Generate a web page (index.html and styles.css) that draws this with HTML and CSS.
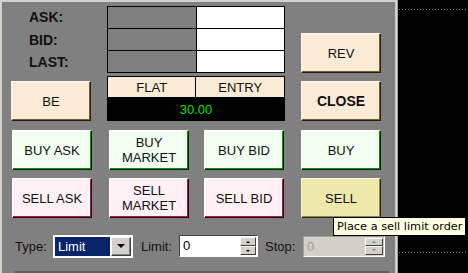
FILE: index.html
```html
<!DOCTYPE html>
<html>
<head>
<meta charset="utf-8">
<link rel="stylesheet" href="styles.css">
</head>
<body>
<div class="screen">
  <div class="panel">
    <div class="grid">
      <div class="labels">
        <div class="lbl">ASK:</div>
        <div class="lbl">BID:</div>
        <div class="lbl">LAST:</div>
      </div>
      <table class="quotes">
        <tr><td class="qk"></td><td class="qv"></td></tr>
        <tr><td class="qk"></td><td class="qv"></td></tr>
        <tr><td class="qk"></td><td class="qv"></td></tr>
      </table>
      <div class="btn beige rev">REV</div>

      <div class="btn beige be">BE</div>
      <table class="pos">
        <tr class="pos-head"><td>FLAT</td><td>ENTRY</td></tr>
        <tr class="pos-val"><td colspan="2">30.00</td></tr>
      </table>
      <div class="btn beige close">CLOSE</div>

      <div class="btn green">BUY ASK</div>
      <div class="btn green">BUY<br>MARKET</div>
      <div class="btn green">BUY BID</div>
      <div class="btn green">BUY</div>

      <div class="btn pink">SELL ASK</div>
      <div class="btn pink">SELL<br>MARKET</div>
      <div class="btn pink">SELL BID</div>
      <div class="btn gold">SELL</div>
    </div>

    <div class="controls">
      <span class="clabel">Type:</span>
      <div class="combo">
        <div class="combo-sel">Limit</div>
        <div class="combo-btn"><span class="tri-down"></span></div>
      </div>
      <span class="clabel limit-lbl">Limit:</span>
      <div class="spin">
        <div class="spin-val">0</div>
        <div class="spin-btns">
          <div class="sbtn"><span class="tri-up"></span></div>
          <div class="sbtn"><span class="tri-dn"></span></div>
        </div>
      </div>
      <span class="clabel stop-lbl">Stop:</span>
      <div class="spin disabled">
        <div class="spin-val">0</div>
        <div class="spin-btns">
          <div class="sbtn"><span class="tri-up"></span></div>
          <div class="sbtn"><span class="tri-dn"></span></div>
        </div>
      </div>
    </div>
    <div class="hbar"></div>
  </div>
  <div class="divider"></div>
  <div class="chart">
    <div class="dots top-dots"></div>
    <div class="dots bottom-dots"></div>
  </div>
  <div class="tooltip">Place a sell limit order</div>
</div>
</body>
</html>
```
FILE: styles.css
```css
html, body {
  margin: 0;
  padding: 0;
  background: #000;
}
.screen {
  position: relative;
  display: flex;
  width: 468px;
  height: 273px;
  overflow: hidden;
  font-family: "Liberation Sans", Arial, sans-serif;
  font-size: 13px;
  color: #000;
}
.panel {
  box-sizing: border-box;
  width: 395px;
  height: 273px;
  background: #808080;
  border-top: 2px solid #d4d0c8;
  border-left: 2px solid #d4d0c8;
  padding: 4px 0 0 10px;
  display: flex;
  flex-direction: column;
}
.divider {
  box-sizing: border-box;
  width: 3px;
  height: 273px;
  background: #d4d0c8;
  border-right: 1px solid #a8a8a8;
}
.chart {
  flex: 1;
  background: #000;
  display: flex;
  flex-direction: column;
}
.dots {
  height: 1px;
  margin-left: 1px;
  background: repeating-linear-gradient(90deg, #8a8a8a 0 1px, transparent 1px 3px);
}
.top-dots { margin-top: 9px; }
.bottom-dots { margin-top: 242px; }

.grid {
  display: grid;
  grid-template-columns: 81px 79px 81px 80px;
  grid-template-rows: 67px 48px 49px 48px;
  column-gap: 16px;
  align-items: end;
}
.labels {
  align-self: stretch;
  display: flex;
  flex-direction: column;
  padding-left: 17px;
}
.lbl {
  height: 22px;
  line-height: 22px;
  font-weight: bold;
  font-size: 14px;
  color: #111;
}
.labels .lbl:first-child { height: 23px; }

table {
  border-collapse: collapse;
  border-spacing: 0;
}
.quotes {
  grid-column: 2 / span 2;
  margin-left: -2px;
  width: 178px;
  height: 67px;
  align-self: start;
}
.quotes td {
  border: 1px solid #000;
  height: 21px;
  padding: 0;
}
.qk { background: #808080; width: 88px; }
.qv { background: #fff; }

.pos {
  grid-column: 2 / span 2;
  margin-left: -2px;
  width: 178px;
  height: 45px;
}
.pos td {
  border: 1px solid #000;
  padding: 0;
  text-align: center;
}
.pos-head td {
  background: #faebd7;
  height: 20px;
  width: 88px;
  color: #111;
}
.pos-val td {
  background: #000;
  color: #00e000;
  height: 22px;
}

.btn {
  box-sizing: border-box;
  width: 80px;
  height: 40px;
  border: 1px solid;
  display: flex;
  align-items: center;
  justify-content: center;
  text-align: center;
  line-height: 15px;
  color: #111;
}
.be { margin-left: -1px; }
.beige {
  background: #faebd7;
  border-color: #fffaf2 #2a1e0e #2a1e0e #fffaf2;
  box-shadow: inset -1px -1px 0 #7a5a2e;
}
.green {
  background: #f0fff0;
  border-color: #ffffff #002400 #002400 #ffffff;
  box-shadow: inset -1px -1px 0 #0a8a0a;
}
.pink {
  background: #fff0f5;
  border-color: #ffffff #2e0012 #2e0012 #ffffff;
  box-shadow: inset -1px -1px 0 #9a2050;
}
.gold {
  background: #eee8aa;
  border-color: #fbf8e0 #2a2810 #2a2810 #fbf8e0;
  box-shadow: inset -1px -1px 0 #8e8850;
}
.close {
  font-weight: bold;
  font-size: 14px;
}

.controls {
  display: flex;
  align-items: center;
  margin-top: 16px;
  padding-left: 3px;
  height: 24px;
}
.clabel {
  width: 38px;
  color: #1a1010;
}
.limit-lbl { margin-left: 8px; }
.stop-lbl { margin-left: 7px; }

.combo {
  box-sizing: border-box;
  width: 80px;
  height: 23px;
  background: #fff;
  padding: 2px;
  display: flex;
  gap: 1px;
}
.combo-sel {
  flex: 1;
  background: #0a246a;
  color: #fff;
  line-height: 19px;
  padding-left: 3px;
}
.combo-btn {
  box-sizing: border-box;
  width: 20px;
  height: 19px;
  background: #d4d0c8;
  border: 1px solid;
  border-color: #fff #404040 #404040 #fff;
  box-shadow: inset -1px -1px 0 #808080;
  display: flex;
  align-items: center;
  justify-content: center;
}
.tri-down {
  width: 0;
  height: 0;
  border-left: 4px solid transparent;
  border-right: 4px solid transparent;
  border-top: 4px solid #000;
}

.spin {
  box-sizing: border-box;
  width: 79px;
  height: 22px;
  background: #fff;
  border: 1px solid;
  border-color: #404040 #fff #fff #404040;
  display: flex;
  padding: 1px 1px 1px 0;
}
.spin.disabled {
  width: 82px;
  height: 21px;
  background: #d4d0c8;
  border-color: #a0a0a0 #fff #fff #a0a0a0;
}
.spin-val {
  flex: 1;
  padding-left: 3px;
  line-height: 18px;
}
.disabled .spin-val { color: #a09c94; }
.spin-btns {
  width: 16px;
  display: flex;
  flex-direction: column;
}
.disabled .spin-btns { width: 18px; }
.sbtn {
  box-sizing: border-box;
  flex: 1;
  background: #d4d0c8;
  border: 1px solid;
  border-color: #fff #404040 #404040 #fff;
  display: flex;
  align-items: center;
  justify-content: center;
}
.tri-up {
  width: 0; height: 0;
  border-left: 2px solid transparent;
  border-right: 2px solid transparent;
  border-bottom: 2px solid #000;
}
.tri-dn {
  width: 0; height: 0;
  border-left: 2px solid transparent;
  border-right: 2px solid transparent;
  border-top: 2px solid #000;
}
.disabled .tri-up { border-bottom-color: #808080; }
.disabled .tri-dn { border-top-color: #808080; }

.hbar {
  margin-top: auto;
  margin-left: 3px;
  width: 374px;
  height: 2px;
  background: #5e5e5e;
}

.tooltip {
  position: absolute;
  left: 333px;
  top: 217px;
  box-sizing: border-box;
  width: 133px;
  height: 19px;
  background: #ffffe1;
  border: 1px solid #000;
  font-family: "DejaVu Sans", sans-serif;
  font-size: 11.3px;
  line-height: 17px;
  padding-left: 3px;
  white-space: nowrap;
  color: #000;
}
```
